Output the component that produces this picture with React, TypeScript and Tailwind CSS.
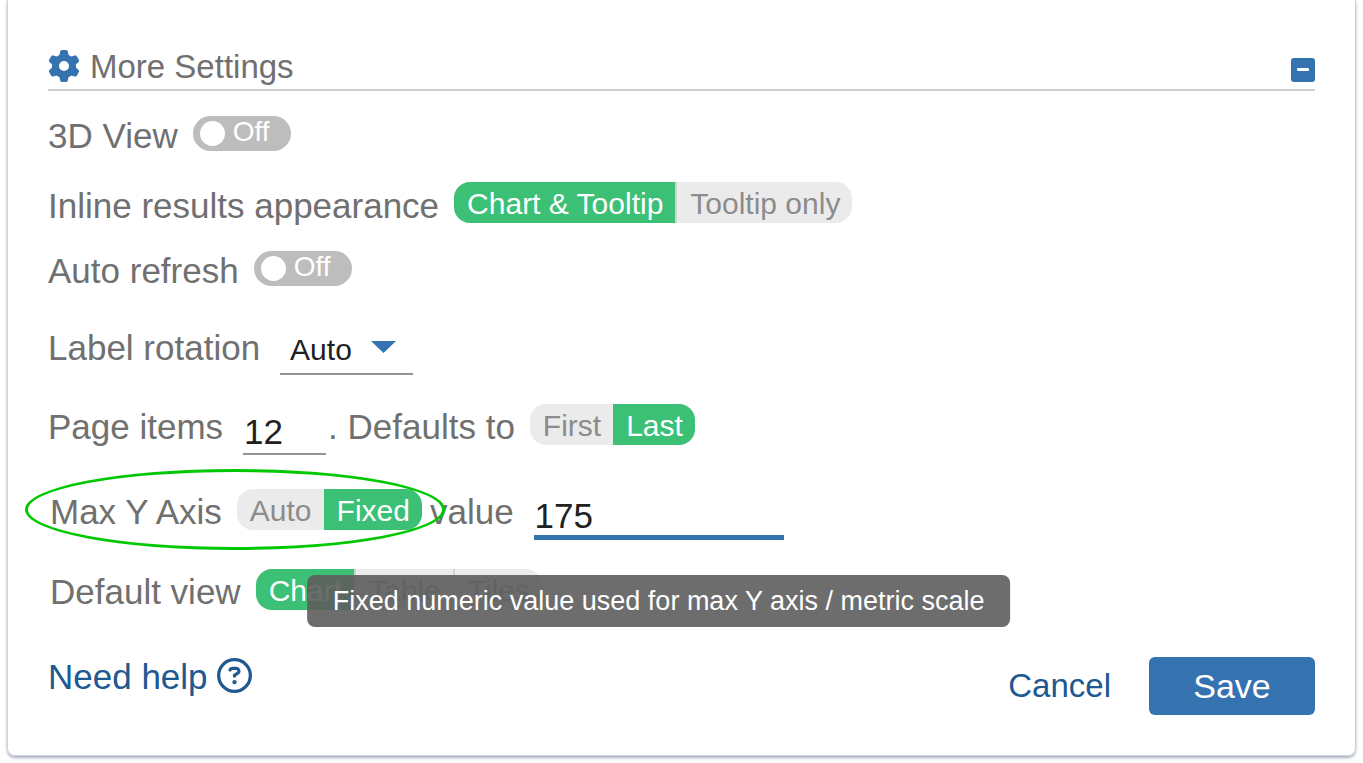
import { useState, type ReactNode } from 'react';
import { FaGear, FaRegCircleQuestion } from 'react-icons/fa6';

type SegmentedProps = {
  label: string;
  options: string[];
  value: string;
  onChange: (value: string) => void;
};

function Segmented({ label, options, value, onChange }: SegmentedProps) {
  const selectedIndex = options.indexOf(value);

  return (
    <div role="group" aria-label={label} className="flex h-[41px] overflow-hidden rounded-2xl bg-[#ebebeb]">
      {options.map((option, i) => (
        <button
          key={option}
          type="button"
          aria-pressed={option === value}
          onClick={() => onChange(option)}
          className={`pt-0.5 pr-3 pl-[13px] text-[30px] leading-[39px] whitespace-nowrap ${
            option === value ? 'bg-[#3bc076] text-white' : 'text-[#8c8c8c]'
          } ${i > selectedIndex ? 'border-l-2 border-[#d2d2d2]' : ''}`}
        >
          {option}
        </button>
      ))}
    </div>
  );
}

function Toggle({ label }: { label: string }) {
  const [on, setOn] = useState(false);

  return (
    <label className="flex cursor-pointer items-start gap-[15px]">
      <span className="pt-1">{label}</span>
      <input type="checkbox" role="switch" className="sr-only" checked={on} onChange={(e) => setOn(e.target.checked)} />
      <span className="mt-1 flex h-[35px] w-[98px] items-center gap-2 rounded-full bg-[#bdbdbd] px-[7px] text-[28px] leading-[31px] text-white">
        <span className="size-[25px] rounded-full bg-white" />
        <span className="h-[35px]">{on ? 'On' : 'Off'}</span>
      </span>
    </label>
  );
}

function Row({ className = '', children }: { className?: string; children: ReactNode }) {
  return <div className={`flex items-start whitespace-nowrap ${className}`}>{children}</div>;
}

export default function App() {
  const [appearance, setAppearance] = useState('Chart & Tooltip');
  const [page, setPage] = useState('Last');
  const [maxY, setMaxY] = useState('Fixed');
  const [view, setView] = useState('Chart');

  return (
    <div className="bg-white px-[7px] pb-2 font-['Liberation_Sans',Arial,sans-serif]">
      <div className="rounded-b-lg border-x border-b border-[#cdd3dc] px-10 pt-12 pb-10 text-[35px] leading-10 text-[#707070] shadow-[0_2px_3px_#a9afc0]">
        {/* Section header */}
        <header className="flex h-[43px] items-start justify-between border-b-2 border-[#cfcfcf]">
          <div className="flex items-start gap-[10px]">
            <FaGear className="mt-0.5 size-8 text-[#3572b0]" />
            <h2 className="text-[33px] leading-[38px]">More Settings</h2>
          </div>
          <button type="button" aria-label="Collapse" className="mt-[10px]">
            <svg viewBox="0 0 24 24" className="size-6">
              <rect width="24" height="24" rx="3" fill="#3572b0" />
              <rect x="6" y="10" width="12" height="3" rx="1" fill="#fff" />
            </svg>
          </button>
        </header>

        <Row className="mt-[21px]">
          <Toggle label="3D View" />
        </Row>

        <Row className="mt-[26px] gap-[15px]">
          <span className="pt-1">Inline results appearance</span>
          <Segmented
            label="Inline results appearance"
            options={['Chart & Tooltip', 'Tooltip only']}
            value={appearance}
            onChange={setAppearance}
          />
        </Row>

        <Row className="mt-[21px]">
          <Toggle label="Auto refresh" />
        </Row>

        <Row className="mt-[33px] gap-5">
          <label htmlFor="rotation" className="pt-1">Label rotation</label>
          <div className="relative">
            <select
              id="rotation"
              defaultValue="Auto"
              className="h-[51px] w-[133px] appearance-none border-b-2 border-[#949494] bg-transparent pt-0.5 pl-[10px] text-[30px] text-[#212121] outline-none"
            >
              <option>Auto</option>
              <option>45°</option>
              <option>90°</option>
            </select>
            <svg viewBox="0 0 25 12" className="pointer-events-none absolute top-[17px] right-[17px] h-3 w-[25px] fill-[#3572b0]">
              <path d="M0 0h25L12.5 12z" />
            </svg>
          </div>
        </Row>

        <Row className="mt-[29px]">
          <label htmlFor="items" className="pt-[3px] pr-5">Page items</label>
          <input
            id="items"
            type="text"
            defaultValue="12"
            className="h-[51px] w-[83px] border-b-2 border-[#949494] pt-[6px] pl-px text-[#212121] outline-none"
          />
          <span className="pt-[3px] pr-[15px] pl-0.5">. Defaults to</span>
          <Segmented label="Defaults to" options={['First', 'Last']} value={page} onChange={setPage} />
        </Row>

        <Row className="relative mt-[34px] pl-0.5">
          <span className="pt-[3px] pr-[15px]">Max Y Axis</span>
          <Segmented label="Max Y Axis" options={['Auto', 'Fixed']} value={maxY} onChange={setMaxY} />
          <label htmlFor="max" className="pt-[3px] pr-5 pl-2">value</label>
          <div className="relative">
            <input
              id="max"
              type="text"
              defaultValue="175"
              aria-describedby="max-tip"
              className="h-[51px] w-[250px] border-b-5 border-[#3572b0] pt-[7px] pl-px text-[#212121] outline-none"
            />
            <div
              id="max-tip"
              role="tooltip"
              className="absolute top-[86px] left-1/2 z-10 -translate-x-1/2 rounded-lg bg-[#5d5d5d]/90 px-[26px] text-[27px] leading-[52px] text-white"
            >
              Fixed numeric value used for max Y axis / metric scale
            </div>
          </div>
          {/* Highlight ring around the axis setting */}
          <div className="pointer-events-none absolute -top-5 -left-[23px] h-[81px] w-[420px] rounded-[50%] border-[3px] border-[#00c800]" />
        </Row>

        <Row className="mt-[29px] gap-[15px] pl-0.5">
          <span className="pt-[3px]">Default view</span>
          <Segmented label="Default view" options={['Chart', 'Table', 'Tiles']} value={view} onChange={setView} />
        </Row>

        <footer className="mt-[45px] flex items-start justify-between text-[#205891]">
          <a href="#help" className="flex items-start gap-[9px]">
            Need help
            <FaRegCircleQuestion className="mt-px size-[35px]" />
          </a>
          <div className="flex gap-[38px]">
            <button type="button" className="text-[33px]">Cancel</button>
            <button type="button" className="h-[58px] w-[166px] rounded-md bg-[#3572b0] text-[34px] text-white">
              Save
            </button>
          </div>
        </footer>
      </div>
    </div>
  );
}
